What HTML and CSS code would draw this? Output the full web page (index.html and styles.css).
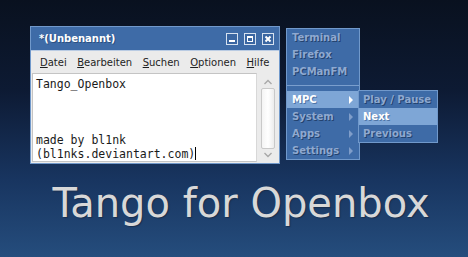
FILE: index.html
```html
<!DOCTYPE html>
<html>
<head lang="en">
    <meta charset="UTF-8">
    <title>Tango for Openbox</title>
    <link rel="stylesheet" href="styles.css">
</head>
<body>
<div class="desktop">
    <div class="window">
        <div class="titlebar">
            <span class="title">*(Unbenannt)</span>
            <div class="buttons">
                <span class="btn"><svg width="10" height="10" viewBox="0 0 10 10"><rect x="2" y="6" width="6" height="2" fill="#fff"/></svg></span>
                <span class="btn"><svg width="10" height="10" viewBox="0 0 10 10"><rect x="2.5" y="2.5" width="5" height="5" fill="none" stroke="#fff" stroke-width="1"/><rect x="2" y="2" width="6" height="2" fill="#fff"/></svg></span>
                <span class="btn"><svg width="10" height="10" viewBox="0 0 10 10"><path d="M2.5 2.5 L7.5 7.5 M7.5 2.5 L2.5 7.5" stroke="#fff" stroke-width="2"/></svg></span>
            </div>
        </div>
        <div class="client">
            <ul class="menubar">
                <li><u>D</u>atei</li>
                <li><u>B</u>earbeiten</li>
                <li><u>S</u>uchen</li>
                <li><u>O</u>ptionen</li>
                <li><u>H</u>ilfe</li>
            </ul>
            <div class="editor">
                <div class="text">Tango_Openbox<br><br><br><br>made by bl1nk<br>(bl1nks.deviantart.com)<span class="caret"></span></div>
                <div class="scrollbar">
                    <svg width="10" height="6" viewBox="0 0 10 6"><path d="M1.5 5 L5 1.5 L8.5 5" fill="none" stroke="#a8a8a8" stroke-width="1.4"/></svg>
                    <div class="slider"></div>
                    <svg width="10" height="6" viewBox="0 0 10 6"><path d="M1.5 1 L5 4.5 L8.5 1" fill="none" stroke="#a8a8a8" stroke-width="1.4"/></svg>
                </div>
            </div>
        </div>
    </div>

    <ul class="menu">
        <li>Terminal</li>
        <li>Firefox</li>
        <li>PCManFM</li>
        <li class="sep"></li>
        <li class="sub active">MPC
            <ul class="menu submenu">
                <li>Play / Pause</li>
                <li class="active">Next</li>
                <li>Previous</li>
            </ul>
        </li>
        <li class="sub">System</li>
        <li class="sub">Apps</li>
        <li class="sub">Settings</li>
    </ul>

    <h1 class="banner">Tango for Openbox</h1>
</div>
</body>
</html>
```

FILE: styles.css
```css
*{
    margin:0;
    padding:0;
    box-sizing:border-box;
}
ul,ul>li{
    list-style:none;
}
html,body{
    width:468px;
    height:257px;
    overflow:hidden;
}
body{
    font-family:"DejaVu Sans",sans-serif;
    background:linear-gradient(#09111f 0%,#0d1a33 35%,#183560 70%,#254d7d 100%);
}
.desktop{
    position:relative;
    height:257px;
}

/* editor window */
.window{
    position:absolute;
    left:30px;top:26px;
    width:250px;
    height:138px;
    border:1px solid #7199cb;
    background:#3e6ba7;
    display:flex;
    flex-direction:column;
}
.titlebar{
    height:23px;
    display:flex;
    align-items:center;
    justify-content:space-between;
    padding:0 5px 0 8px;
}
.title{
    color:#fff;
    font-weight:bold;
    font-size:10px;
    text-shadow:1px 1px 0 #2c4f80;
}
.buttons{
    display:flex;
    gap:6px;
}
.btn{
    width:12px;
    height:12px;
    border:1px solid #d6e1ef;
    background:#3a66a2;
    display:flex;
}
.client{
    flex:1;
    background:#ebebeb;
    border-top:1px solid #b9cbe3;
    display:flex;
    flex-direction:column;
}
.menubar{
    display:flex;
    height:22px;
    align-items:center;
    padding-left:4px;
    font-size:10px;
    color:#1e1e1e;
}
.menubar li{
    padding:0 5px 0 5px;
    margin-right:0.5px;
}
.editor{
    flex:1;
    display:flex;
    padding:0 2px 1px 1px;
}
.text{
    width:225px;
    background:#fff;
    border:1px solid #c4c4c4;
    border-right-color:#d8d8d8;
    font-family:"DejaVu Sans Mono",monospace;
    font-size:11.5px;
    line-height:14px;
    padding:3px 0 0 3px;
    color:#1a1a1a;
}
.caret{
    display:inline-block;
    width:1px;
    height:13px;
    background:#000;
    vertical-align:-2px;
}
.scrollbar{
    flex:1;
    display:flex;
    flex-direction:column;
    align-items:center;
    padding:6px 0 4px 2px;
    gap:3px;
}
.slider{
    flex:1;
    width:14px;
    background:linear-gradient(90deg,#f4f4f4,#ffffff 50%,#ececec);
    border:1px solid #c9c9c9;
    border-radius:2px;
}

/* root menu */
.menu{
    position:absolute;
    left:286px;top:28px;
    width:74px;
    border:1px solid #7199cb;
    background:#3e6ba7;
    font-size:10px;
    font-weight:bold;
}
.menu li{
    position:relative;
    height:17px;
    line-height:17px;
    padding-left:5px;
    color:#8fa9d0;
    text-shadow:1px 1px 0 #23426e;
}
.menu li.active{
    background:#7ea6d6;
    color:#fff;
    text-shadow:1px 1px 0 #4d74a6;
}
.menu li.sep{
    height:11px;
}
.menu li.sep::before{
    content:'';
    position:absolute;
    left:0;right:0;top:5px;
    height:1px;
    background:#7a9ecd;
}
.menu li.sub::after{
    content:'';
    position:absolute;
    right:6px;top:50%;
    margin-top:-4px;
    border-left:4px solid #7f9dc9;
    border-top:4px solid transparent;
    border-bottom:4px solid transparent;
}
.menu li.sub.active::after{
    border-left-color:#fff;
}
.submenu{
    left:71px;top:-1px;
    width:80px;
}
.submenu li{
    padding-left:4px;
}

.banner{
    position:absolute;
    left:0;right:0;top:180px;
    padding-left:14px;
    text-align:center;
    font-size:40px;
    font-weight:normal;
    color:#d8d8d8;
    text-shadow:1px 1px 1px #1a2f4e;
}
```
